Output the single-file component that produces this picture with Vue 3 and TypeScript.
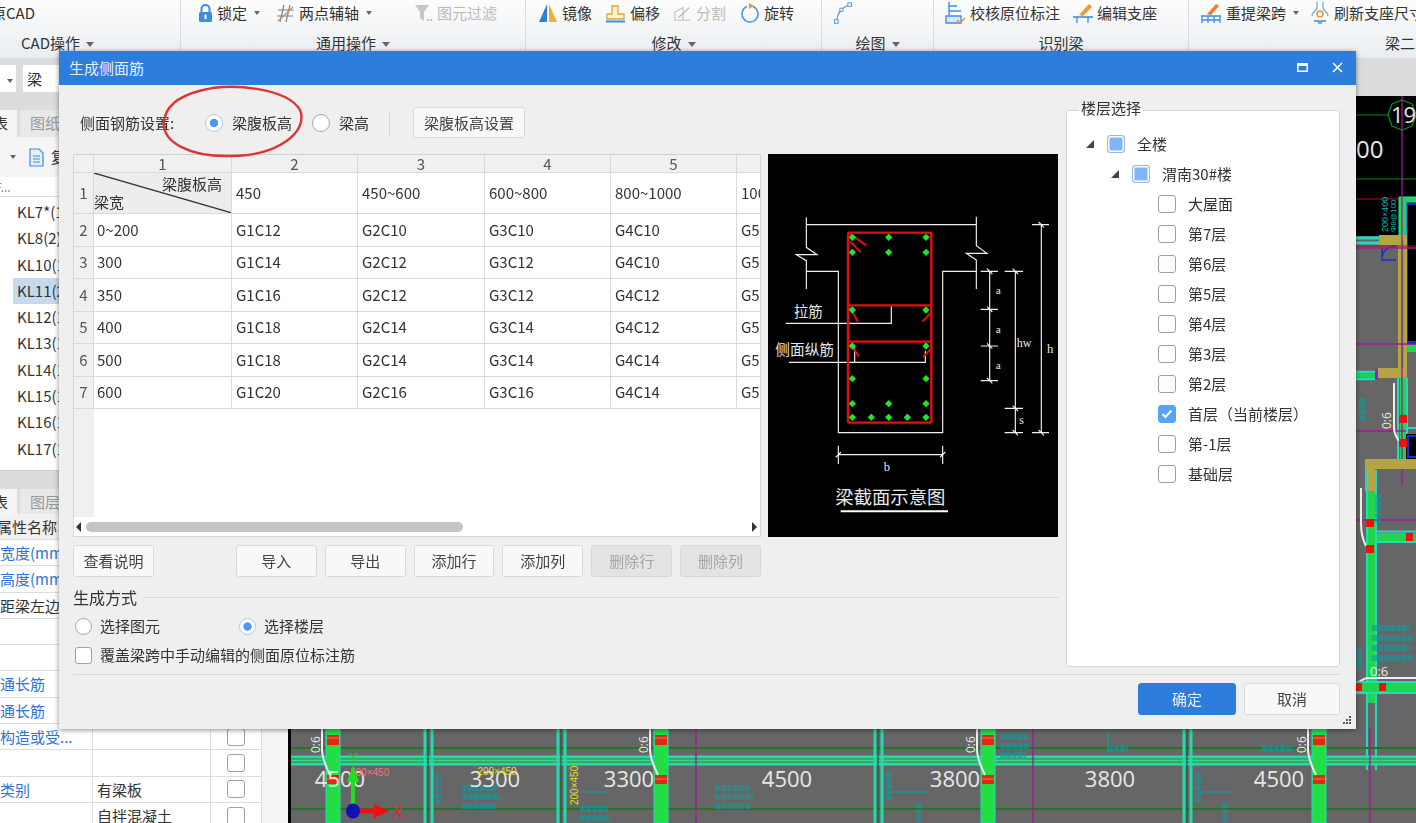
<script setup lang="ts">
// 表格内容
const colNames = ["1", "2", "3", "4", "5", "6"];
const headRow = ["450", "450~600", "600~800", "800~1000", "1000~1200"];
const rows = [
  ["0~200", "G1C12", "G2C10", "G3C10", "G4C10", "G5C10"],
  ["300", "G1C14", "G2C12", "G3C12", "G4C10", "G5C12"],
  ["350", "G1C16", "G2C12", "G3C12", "G4C12", "G5C12"],
  ["400", "G1C18", "G2C14", "G3C14", "G4C12", "G5C12"],
  ["500", "G1C18", "G2C14", "G3C14", "G4C14", "G5C14"],
  ["600", "G1C20", "G2C16", "G3C16", "G4C14", "G5C14"],
];

const floors = ["大屋面", "第7层", "第6层", "第5层", "第4层", "第3层", "第2层", "首层（当前楼层）", "第-1层", "基础层"];
const currentFloor = "首层（当前楼层）";

const beams = ["KL7*(1)", "KL8(2)", "KL10(1)", "KL11(2)", "KL12(1)", "KL13(1)", "KL14(1)", "KL15(1)", "KL16(1)", "KL17(1)"];

const props = [
  { name: "宽度(mm)", value: "", blue: true, box: false },
  { name: "高度(mm)", value: "", blue: true, box: false },
  { name: "距梁左边", value: "", blue: false, box: false },
  { name: "", value: "", blue: false, box: false },
  { name: "", value: "", blue: false, box: false },
  { name: "通长筋", value: "", blue: true, box: false },
  { name: "通长筋", value: "", blue: true, box: false },
  { name: "构造或受...", value: "", blue: true, box: true },
  { name: "", value: "", blue: false, box: true },
  { name: "类别", value: "有梁板", blue: true, box: true },
  { name: "", value: "自拌混凝土", blue: false, box: true },
];

// 示意图里的钢筋点
const rebars = [
  [278, 260], [387, 260], [499, 260], [278, 305], [387, 305], [499, 305],
  [278, 478], [499, 478], [278, 586], [499, 586], [278, 684], [499, 684],
  [278, 759], [387, 759], [499, 759], [278, 800], [335, 800], [387, 800], [443, 800], [499, 800],
];
const diamond = (x: number, y: number) => `${x - 11},${y} ${x},${y - 11} ${x + 11},${y} ${x},${y + 11}`;

const dimTicks = [
  [690, 362, 663, 715], [690, 476, 663, 715], [690, 586, 663, 715], [690, 690, 663, 715],
  [767, 362, 735, 790], [767, 773, 735, 790], [767, 846, 735, 790],
  [845, 222, 817, 868], [845, 846, 817, 868],
];

// CAD 画布（页面坐标）
const thickWalls = [333, 661, 988, 1319];
const thinWalls = [428, 561, 878, 1187];
const magentaLines = [696, 1033, 1370];
const spans = [
  { x: 340, t: "4500" }, { x: 495, t: "3300" }, { x: 629, t: "3300" }, { x: 787, t: "4500" },
  { x: 955, t: "3800" }, { x: 1110, t: "3800" }, { x: 1279, t: "4500" }, { x: 1424, t: "3" },
];
// 看不清的青色小字，用虚线带代替
const tealDashes = [
  "M462 788h36M462 797h38M462 806h34",
  "M1000 737h28M1000 746h30M1000 755h26",
  "M715 788h34M715 797h38M715 806h36",
  "M580 809h28M580 818h30",
  "M1372 628h38M1372 638h42M1372 648h38M1372 658h42",
  "M1262 749h31",
  "M1108 749h20",
];
const tealColumns = [
  "M438 775v28", "M889 772v28", "M1198 773v29", "M919 803v20", "M1225 803v20",
  "M1378 495v28", "M1359 648v22", "M1362 398v24",
];
const tealLines = ["M583 792h25", "M892 792h35", "M1202 792h30", "M1108 732v21"];
</script>

<template>
  <div class="screen">
    <!-- 功能区 -->
    <header class="ribbon">
      <section class="group g-cad">
        <div class="tools"><span class="cut-title">原CAD</span></div>
        <div class="group-name">CAD操作<i class="caret"></i></div>
      </section>

      <section class="group g-common">
        <div class="tools">
          <svg class="ico" width="15" height="19" viewBox="0 0 15 19"><path d="M3.5 8V5a4 4 0 0 1 8 0v3" fill="none" stroke="#3d8de0" stroke-width="2" /><rect x="1" y="8" width="13" height="10" rx="1.5" fill="#3d8de0" /><rect x="6.5" y="10.5" width="2" height="4.5" fill="#fff" /></svg>
          <span>锁定</span><i class="caret small"></i>
          <svg class="ico i-axis" width="19" height="19" viewBox="0 0 19 19"><path d="M8 1 4 18M14 1l-4 17M2 6h16M1 12h16" fill="none" stroke="#77808a" stroke-width="1.1" /><path d="M2 17 17 3" stroke="#d68a4a" stroke-width="1.2" /></svg>
          <span>两点辅轴</span><i class="caret small"></i>
          <svg class="ico i-filter" width="19" height="19" viewBox="0 0 19 19"><path d="M1 1h14l-5 7v9l-4-3V8z" fill="#c4c6c8" /><path d="M13 15h2v2h-2zM16 15h2v2h-2z" fill="#c4c6c8" /></svg>
          <span class="off">图元过滤</span>
        </div>
        <div class="group-name">通用操作<i class="caret"></i></div>
      </section>

      <section class="group g-modify">
        <div class="tools">
          <svg class="ico" width="20" height="20" viewBox="0 0 20 20"><path d="M9 1v18H1z" fill="#2f7fd8" /><path d="M11 1v18h8z" fill="#f2ae2c" /></svg>
          <span>镜像</span>
          <svg class="ico i-offset" width="21" height="19" viewBox="0 0 21 19"><path d="M7 2h6v8h6v5H2v-5h5z" fill="#fbf2cf" stroke="#d9a93a" stroke-width="1.3" /><path d="M1 17.5h19" stroke="#3d8de0" stroke-width="2" /></svg>
          <span>偏移</span>
          <svg class="ico i-split" width="19" height="19" viewBox="0 0 21 19"><path d="M2 17V8l9-5v14zM11 17h8" fill="none" stroke="#bdbfc2" stroke-width="1.2" /><path d="M6 14 18 3" stroke="#c9a98c" stroke-width="1.3" /></svg>
          <span class="off">分割</span>
          <svg class="ico i-rotate" width="19" height="20" viewBox="0 0 19 20"><path d="M12 3.6A8 8 0 1 1 6 3.6" fill="none" stroke="#4d96dc" stroke-width="1.6" /><path d="M8 0l5 3-5 3z" fill="#ee9a2e" /></svg>
          <span>旋转</span>
        </div>
        <div class="group-name">修改<i class="caret"></i></div>
      </section>

      <section class="group g-draw">
        <div class="tools">
          <svg class="ico" width="20" height="23" viewBox="0 0 21 26"><path d="M3 22C4 12 9 6 18 3" fill="none" stroke="#7a8794" stroke-width="1.2" /><rect x="1" y="20" width="4" height="4" fill="#fff" stroke="#3d8de0" /><rect x="7" y="7" width="3.5" height="3.5" fill="#fff" stroke="#3d8de0" /><rect x="16" y="1" width="4" height="4" fill="#fff" stroke="#3d8de0" /></svg>
        </div>
        <div class="group-name">绘图<i class="caret"></i></div>
      </section>

      <section class="group g-recog">
        <div class="tools">
          <svg class="ico" width="21" height="24" viewBox="0 0 21 24"><path d="M4 1v13M4 5h8M4 10h12" fill="none" stroke="#3d8de0" stroke-width="1.4" /><path d="M1 15h15v7H1z" fill="#d8e8f8" stroke="#3d8de0" stroke-width="1.3" /><path d="M12 19l3 3 5-5" fill="none" stroke="#e08a3a" stroke-width="1.5" /></svg>
          <span>校核原位标注</span>
          <svg class="ico i-edit" width="20" height="22" viewBox="0 0 20 22"><path d="M6 13 16 2l3 3-9 9z" fill="#ee9a2e" /><path d="M0 15h20" stroke="#3d8de0" stroke-width="1.6" /><path d="M4 15v6M15 15v6" stroke="#3d8de0" stroke-width="1.3" /></svg>
          <span>编辑支座</span>
        </div>
        <div class="group-name">识别梁</div>
      </section>

      <section class="group g-beam">
        <div class="tools">
          <svg class="ico" width="22" height="22" viewBox="0 0 22 22"><path d="M7 12 16 2l3 2-8 9z" fill="#ee7d2e" /><path d="M1 14h20M2 14v7M8 14v7M14 14v7M20 14v7M2 18h18" fill="none" stroke="#3d8de0" stroke-width="1.3" /></svg>
          <span>重提梁跨</span><i class="caret small"></i>
          <svg class="ico i-refresh" width="20" height="24" viewBox="0 0 20 24"><path d="M7 1v6c0 3-5 3-5 8M13 1v6c0 3 5 3 5 8" fill="none" stroke="#7fb2e4" stroke-width="1.4" /><path d="M4 20h5v3M11 23v-3h5" fill="none" stroke="#3d8de0" stroke-width="1.4" /><circle cx="10" cy="13" r="3" fill="none" stroke="#ee9a2e" stroke-width="1.5" /></svg>
          <span>刷新支座尺寸</span>
        </div>
        <div class="group-name">梁二次编辑</div>
      </section>
    </header>

    <!-- 选择条 -->
    <div class="selector-bar">
      <div class="combo small-combo"><i class="caret small"></i></div>
      <div class="combo">梁</div>
    </div>

    <div class="workspace">
      <!-- 左侧栏 -->
      <aside class="side">
        <div class="side-strip"></div>
        <div class="side-tabs"><span class="tab on">表</span><span class="tab">图纸</span></div>
        <div class="side-tools">
          <i class="caret small"></i>
          <svg width="15" height="19" viewBox="0 0 15 19"><path d="M1 1h9l4 4v13H1z" fill="#e6f0fb" stroke="#3d8de0" stroke-width="1.2" /><path d="M4 8h7M4 11h7M4 14h7" stroke="#3d8de0" /></svg>
          <span>复制</span>
        </div>
        <div class="side-search">F...</div>
        <ul class="beam-list">
          <li v-for="b in beams" :key="b" :class="{ picked: b === 'KL11(2)' }"><span>{{ b }}</span></li>
        </ul>
        <div class="side-gap"></div>
        <div class="side-tabs short"><span class="tab on">表</span><span class="tab">图层</span></div>
        <div class="prop-head"><span class="p-name">属性名称</span></div>
        <div v-for="(p, i) in props" :key="i" class="prop-row">
          <span class="p-name" :class="{ blue: p.blue }">{{ p.name }}</span>
          <span class="p-value">{{ p.value }}</span>
          <span class="p-check"><i v-if="p.box" class="check"></i></span>
        </div>
      </aside>

      <!-- CAD 画布 -->
      <div class="canvas">
        <svg class="cad" width="1128" height="727" viewBox="288 96 1128 727">
          <rect x="288" y="96" width="1128" height="727" fill="#666" />
          <rect x="288" y="96" width="3" height="727" fill="#000" />
          <!-- 右上黑色区域 -->
          <rect x="291" y="96" width="1125" height="140" fill="#000" />
          <rect x="1406" y="203" width="10" height="141" fill="#000" />
          <path d="M1416 204h-9v138h9" fill="none" stroke="#1a2fd0" stroke-width="2" />
          <path d="M1356 115h32M1356 179h60" stroke="#0c8a1e" />
          <path d="M1388 115l4-11 10-4 10 4 4 11-4 11-10 4-10-4z" fill="none" stroke="#0c8a1e" stroke-width="1.3" />
          <text x="1391" y="123" class="cad-num" font-size="22">19</text>
          <text x="1356" y="158" class="cad-num" font-size="24">00</text>
          <path d="M1356 199h44" stroke="#b01020" />
          <!-- 右上墙 -->
          <path d="M1399 197h17v5h-10v33h-7z" fill="#1fd64a" stroke="#25d8c0" />
          <text transform="translate(1388 232) rotate(-90)" class="cad-teal" font-size="9">200×400</text>
          <text transform="translate(1396 232) rotate(-90)" class="cad-teal" font-size="8">Φ8@100</text>
          <path d="M1356 238h24M1356 243h24" stroke="#25d8c0" stroke-width="3" />
          <path d="M1379 240h28" stroke="#b3a544" stroke-width="10" />
          <path d="M1402.500 235v135" stroke="#b3a544" stroke-width="9" />
          <path d="M1402.500 240v130" stroke="#28b060" stroke-width="2" />
          <path d="M1407 345h9v7h-9z" fill="#1fd64a" />
          <path d="M1382 258c1-6 3-10 13-12M1382 248v12h14" fill="none" stroke="#1a2fd0" stroke-width="1.500" />
          <path d="M1356 344h60M1356 248h60" stroke="#a0189a" stroke-width="1.300" />
          <path d="M1356 246h60" stroke="#b01020" />
          <path d="M1356 372h22M1356 379h22" stroke="#25d8c0" stroke-width="2.500" />
          <path d="M1356 375.500h22" stroke="#1fd64a" stroke-width="4" />
          <rect x="1375" y="369" width="3" height="11" fill="#8a20d0" />
          <path d="M1378 373h29" stroke="#b3a544" stroke-width="10" />
          <path d="M1398 378v81M1407 378v81" stroke="#25d8c0" stroke-width="2" />
          <path d="M1400 378h6v81h-6z" fill="#1fd64a" />
          <path d="M1407 428h9" stroke="#25d8c0" stroke-width="2" />
          <rect x="1406" y="434" width="10" height="25" fill="#000" />
          <path d="M1416 436h-8v21h8" fill="none" stroke="#1a2fd0" stroke-width="2" />
          <path d="M1356 431h50" stroke="#a0189a" stroke-width="1.300" />
          <path d="M1402 96v389" stroke="#a0189a" stroke-width="1.300" />
          <path d="M1394 383v45q0 6 5 13" fill="none" stroke="#eee" stroke-width="2" />
          <text transform="translate(1391 429) rotate(-90)" class="cad-label" font-size="12">0:6</text>
          <rect x="1399" y="415" width="8" height="8" fill="#f01010" />
          <rect x="1399" y="439" width="8" height="8" fill="#f01010" />
          <!-- 右侧下墙 -->
          <path d="M1365 464h51" stroke="#b3a544" stroke-width="10" />
          <path d="M1370 459v32" stroke="#b3a544" stroke-width="10" />
          <path d="M1367 470v300M1376 470v300" stroke="#25d8c0" stroke-width="2" />
          <rect x="1368" y="491" width="7" height="212" fill="#1fd64a" />
          <path d="M1377 533h39v8h-39z" fill="#1fd64a" />
          <path d="M1377 531.500h39M1377 542h39" stroke="#25d8c0" stroke-width="2" />
          <path d="M1356 520h60" stroke="#a0189a" stroke-width="1.300" />
          <path d="M1361 488v36q0 12 5 22" fill="none" stroke="#eee" stroke-width="2" />
          <rect x="1366" y="519" width="8" height="8" fill="#f01010" />
          <rect x="1366" y="545" width="8" height="8" fill="#f01010" />
          <rect x="1406" y="533" width="7" height="8" fill="#f01010" />
          <path d="M1356 684q8-6 12-6h48" fill="none" stroke="#eee" stroke-width="2" />
          <path d="M1356 682h60M1356 693h60" stroke="#25d8c0" stroke-width="2" />
          <path d="M1356 683h60v9h-60z" fill="#1fd64a" />
          <rect x="1354" y="683" width="8" height="8" fill="#f01010" />
          <rect x="1379" y="683" width="7" height="8" fill="#f01010" />
          <text x="1370" y="676" class="cad-label" font-size="13">0:6</text>

          <!-- 底部轴网 -->
          <path d="M291 748h1125M291 809h1125" stroke="#1a7a20" stroke-width="2" />
          <path d="M291 757h1125M291 764h1125" stroke="#25d8b0" stroke-width="3" />
          <path d="M291 760.500h1125" stroke="#2a9a40" stroke-width="4" />
          <path d="M291 760.500h1125" stroke="#2bdc78" stroke-width="2" />
          <template v-for="x in thinWalls" :key="'thin' + x">
            <path :d="`M${x - 3} 729V823M${x + 4} 729V823`" stroke="#25d8b0" stroke-width="3" />
            <path :d="`M${x} 729V823`" stroke="#3a5a3a" stroke-width="1.300" />
          </template>
          <template v-for="x in thickWalls" :key="'thick' + x">
            <rect :x="x - 7" y="729" width="14" height="94" fill="#22dd44" stroke="#25d8c0" />
            <rect :x="x - 6" y="735" width="12" height="10" fill="#e02a10" />
            <rect :x="x - 6" y="775" width="12" height="9" fill="#e02a10" />
            <path :d="`M${x - 6} 738h12M${x - 6} 779h12`" stroke="#f07070" />
            <path :d="`M${x - 11} 729v20q0 10 8 26`" fill="none" stroke="#eee" stroke-width="2" />
            <text :transform="`translate(${x - 13} 753) rotate(-90)`" class="cad-label" font-size="12">0:6</text>
          </template>
          <path v-for="x in magentaLines" :key="x" :d="`M${x} 729V823`" stroke="#a0189a" stroke-width="1.300" />
          <path v-for="d in tealDashes" :key="d" :d="d" stroke="#129a9e" stroke-width="6" stroke-dasharray="5 1" opacity="0.6" />
          <path v-for="d in tealColumns" :key="d" :d="d" stroke="#129a9e" stroke-width="6" stroke-dasharray="5 1" opacity="0.6" />
          <path v-for="d in tealLines" :key="d" :d="d" stroke="#129a9e" stroke-width="1.300" />
          <text v-for="s in spans" :key="s.x" :x="s.x" y="787" text-anchor="middle" class="cad-num" font-size="22">{{ s.t }}</text>
          <text x="497" y="775" text-anchor="middle" class="cad-yellow" font-size="10">200×450</text>
          <text transform="translate(578 805) rotate(-90)" class="cad-yellow" font-size="10">200×450</text>
          <text x="350" y="776" class="cad-pink" font-size="10">300×450</text>
          <!-- 坐标轴 -->
          <path d="M353 805v-25" stroke="#1fe01f" stroke-width="4" />
          <path d="M347 782l6-17 6 17z" fill="#1fe01f" />
          <text x="349" y="762" fill="#1fd030" font-size="13" font-family="Liberation Sans, sans-serif">Y</text>
          <path d="M358 811h18" stroke="#ee1010" stroke-width="5" />
          <path d="M374 804l15 7-15 7z" fill="#ee1010" />
          <text x="392" y="818" fill="#d83030" font-size="17" font-family="Liberation Sans, sans-serif">X</text>
          <ellipse cx="353" cy="811" rx="7" ry="7.500" fill="#1010b0" />
        </svg>
      </div>
    </div>

    <!-- 对话框 -->
    <div class="dialog">
      <div class="dialog-title">
        <span>生成侧面筋</span>
        <div class="win-btns">
          <svg width="11" height="9" viewBox="0 0 11 9"><rect x="0.750" y="0.750" width="9.500" height="7.500" fill="none" stroke="#fff" stroke-width="1.500" /><path d="M1 2h9" stroke="#fff" stroke-width="2" /></svg>
          <svg width="11" height="11" viewBox="0 0 11 11"><path d="M1 1l9 9M10 1l-9 9" stroke="#fff" stroke-width="1.600" /></svg>
        </div>
      </div>

      <div class="dialog-body">
        <div class="left-col">
          <div class="setting-row">
            <span class="setting-label">侧面钢筋设置:</span>
            <label class="opt first"><i class="radio on"></i>梁腹板高</label>
            <label class="opt second"><i class="radio"></i>梁高</label>
            <i class="vline"></i>
            <button class="btn setting-btn">梁腹板高设置</button>
          </div>

          <div class="middle-row">
            <div class="sheet">
              <div class="sheet-grid">
                <div class="c head"></div>
                <div v-for="n in colNames" :key="n" class="c head">{{ n }}</div>

                <div class="c rowno">1</div>
                <div class="c corner">
                  <svg class="diag" width="138" height="41" viewBox="0 0 138 41"><path d="M0 0 138 40" stroke="#333" stroke-width="1.300" /></svg>
                  <span class="corner-a">梁腹板高</span>
                  <span class="corner-b">梁宽</span>
                </div>
                <div v-for="h in headRow" :key="h" class="c">{{ h }}</div>

                <template v-for="(r, i) in rows" :key="i">
                  <div class="c rowno">{{ i + 2 }}</div>
                  <div v-for="(v, j) in r" :key="j" class="c" :class="{ first: j === 0 }">{{ v }}</div>
                </template>
              </div>
              <div class="sheet-fill"><i></i></div>
              <div class="sheet-scroll">
                <i class="arrow-l"></i>
                <i class="thumb"></i>
                <i class="arrow-r"></i>
              </div>
            </div>

            <div class="section-pic">
              <svg width="290" height="384" viewBox="25 10 870 1152">
                <rect x="25" y="10" width="870" height="1152" fill="#000" />
                <g fill="none" stroke="#f0f0f0" stroke-width="3.500">
                  <path d="M140 222H650M140 200V290L172 312H110L140 330V415M650 198V285L682 308H620L650 328V415" />
                  <path d="M140 362H236V846H549V362H650" />
                  <path d="M78 518H395V464M88 635H497V600M285 635V590" />
                  <path d="M690 362V690M767 362V846M845 222V846" />
                  <path d="M236 885V940M549 885V940M236 912H549M228 920l16-16M541 920l16-16" />
                  <template v-for="(t, i) in dimTicks" :key="i">
                    <path :d="`M${t[2]} ${t[1]}H${t[3]}M${t[0] - 8} ${t[1] - 8}l16 16`" />
                  </template>
                </g>
                <g fill="none" stroke="#e80e0e" stroke-width="7">
                  <rect x="265" y="246" width="250" height="570" rx="4" />
                  <path d="M265 464H515M265 573H515" />
                  <path d="M272 250 320 285M272 272 303 305M270 470 295 513M515 485 488 513M272 580 298 618M518 590 490 620" stroke-width="6" />
                </g>
                <polygon v-for="(p, i) in rebars" :key="i" :points="diamond(p[0], p[1])" fill="#1fe62a" />
                <text x="103" y="498" class="pic-cn" font-size="43">拉筋</text>
                <text x="47" y="614" class="pic-cn" font-size="44">侧面纵筋</text>
                <text x="708" y="430" class="pic-en" font-size="34">a</text>
                <text x="708" y="547" class="pic-en" font-size="34">a</text>
                <text x="708" y="656" class="pic-en" font-size="34">a</text>
                <text x="771" y="590" class="pic-en" font-size="36">hw</text>
                <text x="862" y="608" class="pic-en" font-size="38">h</text>
                <text x="779" y="820" class="pic-en" font-size="36">s</text>
                <text x="372" y="962" class="pic-en" font-size="38">b</text>
                <text x="227" y="1060" class="pic-cn" font-size="55">梁截面示意图</text>
                <path d="M243 1082H565" stroke="#fff" stroke-width="6" />
              </svg>
            </div>
          </div>

          <div class="sheet-btns">
            <button class="btn">查看说明</button>
            <button class="btn push">导入</button>
            <button class="btn">导出</button>
            <button class="btn">添加行</button>
            <button class="btn">添加列</button>
            <button class="btn" disabled>删除行</button>
            <button class="btn" disabled>删除列</button>
          </div>

          <div class="way-title"><span>生成方式</span><i></i></div>
          <div class="way-row">
            <label class="opt way-a"><i class="radio"></i>选择图元</label>
            <label class="opt"><i class="radio on"></i>选择楼层</label>
          </div>
          <label class="opt cover"><i class="check"></i>覆盖梁跨中手动编辑的侧面原位标注筋</label>
        </div>

        <fieldset class="floors">
          <legend>楼层选择</legend>
          <div class="tree-row lv0"><i class="tri"></i><i class="check part"></i><span>全楼</span></div>
          <div class="tree-row lv1"><i class="tri"></i><i class="check part"></i><span>渭南30#楼</span></div>
          <div v-for="f in floors" :key="f" class="tree-row lv2">
            <i class="check" :class="{ ticked: f === currentFloor }">
              <svg v-if="f === currentFloor" width="12" height="10" viewBox="0 0 12 10"><path d="M1.500 5 4.500 8 10.500 1.500" fill="none" stroke="#fff" stroke-width="2" /></svg>
            </i>
            <span>{{ f }}</span>
          </div>
        </fieldset>
      </div>

      <div class="dialog-foot">
        <button class="btn primary">确定</button>
        <button class="btn cancel">取消</button>
      </div>
      <svg class="grip" width="10" height="10" viewBox="0 0 10 10"><path d="M7 1h2v2H7zM4 4h2v2H4zM7 4h2v2H7zM1 7h2v2H1zM4 7h2v2H4zM7 7h2v2H7z" fill="#556" /></svg>

      <!-- 截图上的红圈批注 -->
      <svg class="mark" width="150" height="76" viewBox="0 0 150 76"><path d="M40 7C72 -2 128 4 141 26 150 48 118 72 72 72 30 73 3 58 5 38 6 24 18 13 40 7Z" fill="none" stroke="#dc3535" stroke-width="2.400" /></svg>
    </div>
  </div>
</template>

<style>
html,
body {
  margin: 0;
  background: #666;
}
</style>

<style scoped>
.screen {
  position: relative;
  width: 1416px;
  height: 823px;
  overflow: hidden;
  font-family: "Noto Sans CJK SC", "Noto Sans", sans-serif;
  font-size: 15px;
  line-height: 20px;
  color: #333;
  filter: blur(0.35px);
}

/* 功能区 */
.ribbon {
  display: flex;
  height: 59px;
  background: linear-gradient(#fdfdfd, #e9edf0);
  border-bottom: 1px solid #d5d8da;
  box-sizing: border-box;
}
.group {
  flex: none;
  border-right: 1px solid #d9dcde;
  box-sizing: border-box;
  display: flex;
  flex-direction: column;
}
.g-cad { width: 181px; }
.g-common { width: 345px; }
.g-modify { width: 296px; }
.g-draw { width: 112px; }
.g-recog { width: 255px; }
.g-beam { width: 227px; border-right: 0; }
.tools {
  height: 26px;
  display: flex;
  align-items: center;
  white-space: nowrap;
  overflow: hidden;
}
.tools span { margin-left: 4px; }
.tools span.off { color: #b9b9b9; }
.group-name {
  margin-top: 6px;
  text-align: center;
  line-height: 22px;
  white-space: nowrap;
  overflow: hidden;
}
.cut-title { margin-left: -9px !important; }
.g-common .tools { padding-left: 17px; }
.g-modify .tools { padding-left: 12px; }
.g-draw .tools { padding-left: 11px; }
.g-recog .tools { padding-left: 11px; }
.g-beam .tools { padding-left: 11px; }
.g-cad .group-name { padding-left: 21px; text-align: left; }
.g-beam .group-name { padding-left: 196px; }
.i-axis { margin-left: 16px; }
.i-filter { margin-left: 42px; }
.i-offset { margin-left: 13px; }
.i-split { margin-left: 13px; }
.i-rotate { margin-left: 15px; }
.i-edit { margin-left: 13px; }
.i-refresh { margin-left: 11px; }
.ico { flex: none; }
.caret {
  display: inline-block;
  width: 0;
  height: 0;
  margin-left: 6px;
  vertical-align: 2px;
  border-left: 4.500px solid transparent;
  border-right: 4.500px solid transparent;
  border-top: 5px solid #666;
}
.caret.small {
  margin-left: 7px;
  border-left-width: 3px;
  border-right-width: 3px;
  border-top-width: 4px;
}

/* 选择条 */
.selector-bar {
  height: 37px;
  box-sizing: border-box;
  background: #dcdcdc;
  display: flex;
  gap: 7px;
  padding-top: 6px;
}
.combo {
  width: 100px;
  height: 27px;
  background: #fff;
  line-height: 27px;
  padding-left: 4px;
  box-sizing: border-box;
  flex: none;
}
.small-combo { width: 16px; padding-left: 0; }

.workspace {
  display: flex;
  height: 727px;
}

/* 左侧栏 */
.side {
  width: 288px;
  flex: none;
  background: #f5f5f5;
  overflow: hidden;
}
.side-strip { height: 14px; background: #dcdcdc; }
.side-tabs {
  height: 27px;
  display: flex;
  background: #dcdcdc;
}
.side-tabs.short { height: 25px; }
.tab {
  width: 60px;
  padding-left: 10px;
  line-height: 26px;
  background: #e8e8e8;
  color: #999;
  flex: none;
  margin-left: 3px;
}
.tab.on {
  width: 17px;
  padding: 0;
  margin: 0;
  background: #f5f5f5;
  color: #333;
  text-indent: -7px;
  overflow: hidden;
}
.side-tools {
  height: 40px;
  display: flex;
  align-items: center;
  background: #f5f5f5;
  padding-left: 3px;
  white-space: nowrap;
}
.side-tools svg { margin: 0 7px 0 13px; }
.side-search {
  height: 20px;
  background: #fff;
  border-bottom: 1px solid #ddd;
  box-sizing: border-box;
  color: #888;
  font-size: 12px;
  text-indent: -5px;
  overflow: hidden;
}
.beam-list {
  margin: 0;
  padding: 2px 0 0 13px;
  list-style: none;
  background: #fff;
  height: 274px;
  box-sizing: border-box;
  border-bottom: 1px solid #ccc;
}
.beam-list li {
  height: 26.300px;
  line-height: 26px;
  padding-left: 4px;
}
.beam-list li.picked { background: #c7d9ee; }
.side-gap { height: 18px; background: #dcdcdc; }
.prop-head {
  height: 26px;
  line-height: 25px;
  background: #f1f1f1;
  border-bottom: 1px solid #ddd;
  box-sizing: border-box;
}
.prop-head .p-name { margin-left: -3px; }
.prop-row {
  display: grid;
  grid-template-columns: 92px 118px 52px;
  height: 26.300px;
  line-height: 25px;
  width: 262px;
  box-sizing: border-box;
  border-bottom: 1px solid #ddd;
  background: #fff;
}
.p-name {
  white-space: nowrap;
  overflow: hidden;
}
.p-name.blue { color: #2f73d8; }
.p-value {
  padding-left: 4px;
  white-space: nowrap;
  border-left: 1px solid #ddd;
}
.p-check {
  display: flex;
  align-items: center;
  justify-content: center;
  border-left: 1px solid #ddd;
  border-right: 1px solid #ddd;
}

/* 画布 */
.canvas {
  flex: 1;
  min-width: 0;
}
.cad { display: block; }
.cad-num {
  fill: #e8e8e8;
  font-family: "Open Sans", sans-serif;
}
.cad-label {
  fill: #e8e8e8;
  font-family: "Open Sans", sans-serif;
}
.cad-teal {
  fill: #12b0b0;
  font-family: "Liberation Sans", sans-serif;
}
.cad-yellow {
  fill: #e8e020;
  font-family: "Liberation Sans", sans-serif;
}
.cad-pink {
  fill: #f07878;
  font-family: "Liberation Sans", sans-serif;
}

/* 对话框 */
.dialog {
  position: absolute;
  left: 59px;
  top: 51px;
  width: 1297px;
  height: 678px;
  display: flex;
  flex-direction: column;
  background: #efeff0;
  box-shadow: 0 1px 5px rgba(0, 0, 0, 0.45);
}
.dialog-title {
  height: 33px;
  flex: none;
  display: flex;
  align-items: center;
  justify-content: space-between;
  padding: 0 13px 1px 10px;
  background: #2d7ddd;
  color: #e6f0fc;
}
.win-btns {
  display: flex;
  align-items: center;
  gap: 24px;
}
.dialog-body {
  display: flex;
  gap: 8px;
  height: 590px;
  flex: none;
  padding: 16px 0 0;
  box-sizing: border-box;
  border-bottom: 1px solid #d6d8da;
  margin: 0 16px 0 14px;
}
.left-col {
  width: 985px;
  flex: none;
}
.setting-row {
  display: flex;
  align-items: center;
  height: 31px;
  margin-top: 6px;
  padding-left: 7px;
  white-space: nowrap;
}
.setting-label { width: 125px; flex: none; }
.opt {
  display: flex;
  align-items: center;
  white-space: nowrap;
}
.opt.first { width: 107px; flex: none; }
.opt.second { width: 77px; flex: none; }
.radio {
  flex: none;
  width: 18px;
  height: 18px;
  box-sizing: border-box;
  border: 1.500px solid #a6a6a6;
  border-radius: 50%;
  background: #fff;
  margin-right: 9px;
  display: block;
}
.radio.on {
  border-color: #a9c8ec;
  background: radial-gradient(circle, #4a97f0 0 3.800px, #fff 4.500px);
}
.vline {
  width: 1px;
  height: 24px;
  background: #d5d5d5;
  margin-right: 23px;
}
.btn {
  width: 81px;
  height: 32px;
  padding: 0;
  box-sizing: border-box;
  border: 1px solid #d6d9dc;
  border-radius: 3px;
  background: #f8f8f9;
  color: #444;
  font: inherit;
  line-height: 30px;
}
.btn:disabled {
  background: #e2e3e4;
  color: #a5a5a5;
}
.btn.primary {
  background: #2d7ddd;
  border-color: #2d7ddd;
  color: #e6f0fc;
}
.setting-btn { width: 112px; height: 31px; }

.middle-row {
  display: flex;
  gap: 7px;
  margin-top: 16px;
}
.sheet {
  width: 688px;
  height: 383px;
  flex: none;
  box-sizing: border-box;
  display: flex;
  flex-direction: column;
  background: #fff;
  border: 1px solid #d6d6d6;
  border-top-color: #cfcfcf;
  overflow: hidden;
}
.sheet-grid {
  display: grid;
  grid-template-columns: 20px 138px 126px 127px 126px 126px 126px;
  grid-template-rows: 18px 41px repeat(6, 32.500px);
  flex: none;
}
.c {
  box-sizing: border-box;
  padding-left: 4px;
  border-right: 1px solid #d9d9d9;
  border-bottom: 1px solid #d9d9d9;
  display: flex;
  align-items: center;
  white-space: nowrap;
  overflow: hidden;
}
.c.first { padding-left: 3px; }
.c.head {
  justify-content: center;
  padding: 0;
  background: #f0f0f0;
  color: #555;
  line-height: 18px;
}
.c.rowno {
  justify-content: center;
  padding: 0;
  background: #f0f0f0;
  color: #555;
}
.c.corner {
  position: relative;
  padding: 0;
  background: #ededed;
}
.diag {
  position: absolute;
  left: 0;
  top: 0;
}
.corner-a {
  position: absolute;
  right: 9px;
  top: 1px;
}
.corner-b {
  position: absolute;
  left: 0;
  bottom: 1px;
}
.sheet-fill {
  flex: 1;
  min-height: 0;
  display: flex;
}
.sheet-fill i {
  display: block;
  width: 20px;
  background: #f0f0f0;
}
.sheet-scroll {
  flex: none;
  height: 19px;
  display: flex;
  align-items: center;
  padding: 0 3px 0 2px;
}
.arrow-l,
.arrow-r {
  width: 0;
  height: 0;
  border-top: 5px solid transparent;
  border-bottom: 5px solid transparent;
  flex: none;
}
.arrow-l { border-right: 5px solid #333; }
.arrow-r {
  border-left: 5px solid #333;
  margin-left: auto;
}
.thumb {
  width: 377px;
  height: 10px;
  margin-left: 5px;
  border-radius: 5px;
  background: #c4c4c4;
}
.section-pic {
  width: 290px;
  height: 383px;
  flex: none;
  overflow: hidden;
  background: #000;
}
.section-pic svg { display: block; }
.pic-cn {
  fill: #e8e8e8;
  font-family: "Noto Sans CJK SC", sans-serif;
}
.pic-en {
  fill: #e8e8e8;
  font-family: "Liberation Serif", serif;
}

.sheet-btns {
  display: flex;
  gap: 8px;
  width: 688px;
  margin-top: 8px;
}
.push { margin-left: 74px; }

.way-title {
  display: flex;
  align-items: center;
  gap: 8px;
  margin-top: 10px;
  height: 20px;
  font-size: 16px;
}
.way-title i {
  flex: 1;
  height: 1px;
  background: #d5d7d9;
}
.way-row {
  display: flex;
  margin-top: 9px;
  padding-left: 2px;
}
.way-row .radio {
  width: 17px;
  height: 17px;
  margin-right: 8px;
}
.way-a { width: 164px; flex: none; }
.cover {
  margin-top: 9px;
  padding-left: 2px;
}
.cover .check {
  width: 17px;
  height: 17px;
  margin-right: 8px;
}

.check {
  display: flex;
  align-items: center;
  justify-content: center;
  flex: none;
  width: 18px;
  height: 18px;
  box-sizing: border-box;
  border: 1.500px solid #a0a0a0;
  border-radius: 3px;
  background: #fff;
}
.check.part {
  border-color: #9fb8d4;
  background: #7fb6fa;
  box-shadow: inset 0 0 0 1.500px #fff;
}
.check.ticked {
  border-color: #5aa2f5;
  background: #5aa2f5;
}

.floors {
  margin: -1px 0 0;
  padding: 9px 0 0;
  width: 274px;
  height: 567px;
  box-sizing: border-box;
  flex: none;
  background: #fff;
  border: 1px solid #d5d5d5;
  border-radius: 3px;
}
.floors legend {
  margin-left: 12px;
  padding: 0 2px;
  line-height: 20px;
  position: relative;
  top: -2px;
}
.tree-row {
  height: 30px;
  display: flex;
  align-items: center;
}
.tree-row .check { margin-right: 12px; }
.lv0 { padding-left: 19px; }
.lv1 { padding-left: 44px; }
.lv2 { padding-left: 91px; }
.tri {
  width: 0;
  height: 0;
  margin-right: 13px;
  border-left: 8px solid transparent;
  border-bottom: 8px solid #444;
  flex: none;
}

.dialog-foot {
  flex: 1;
  display: flex;
  justify-content: flex-end;
  gap: 8px;
  padding: 8px 16px 0 0;
}
.dialog-foot .primary { width: 98px; }
.dialog-foot .cancel { width: 96px; }
.grip {
  position: absolute;
  right: 4px;
  bottom: 4px;
}
.mark {
  position: absolute;
  left: 100px;
  top: 33px;
}
</style>
